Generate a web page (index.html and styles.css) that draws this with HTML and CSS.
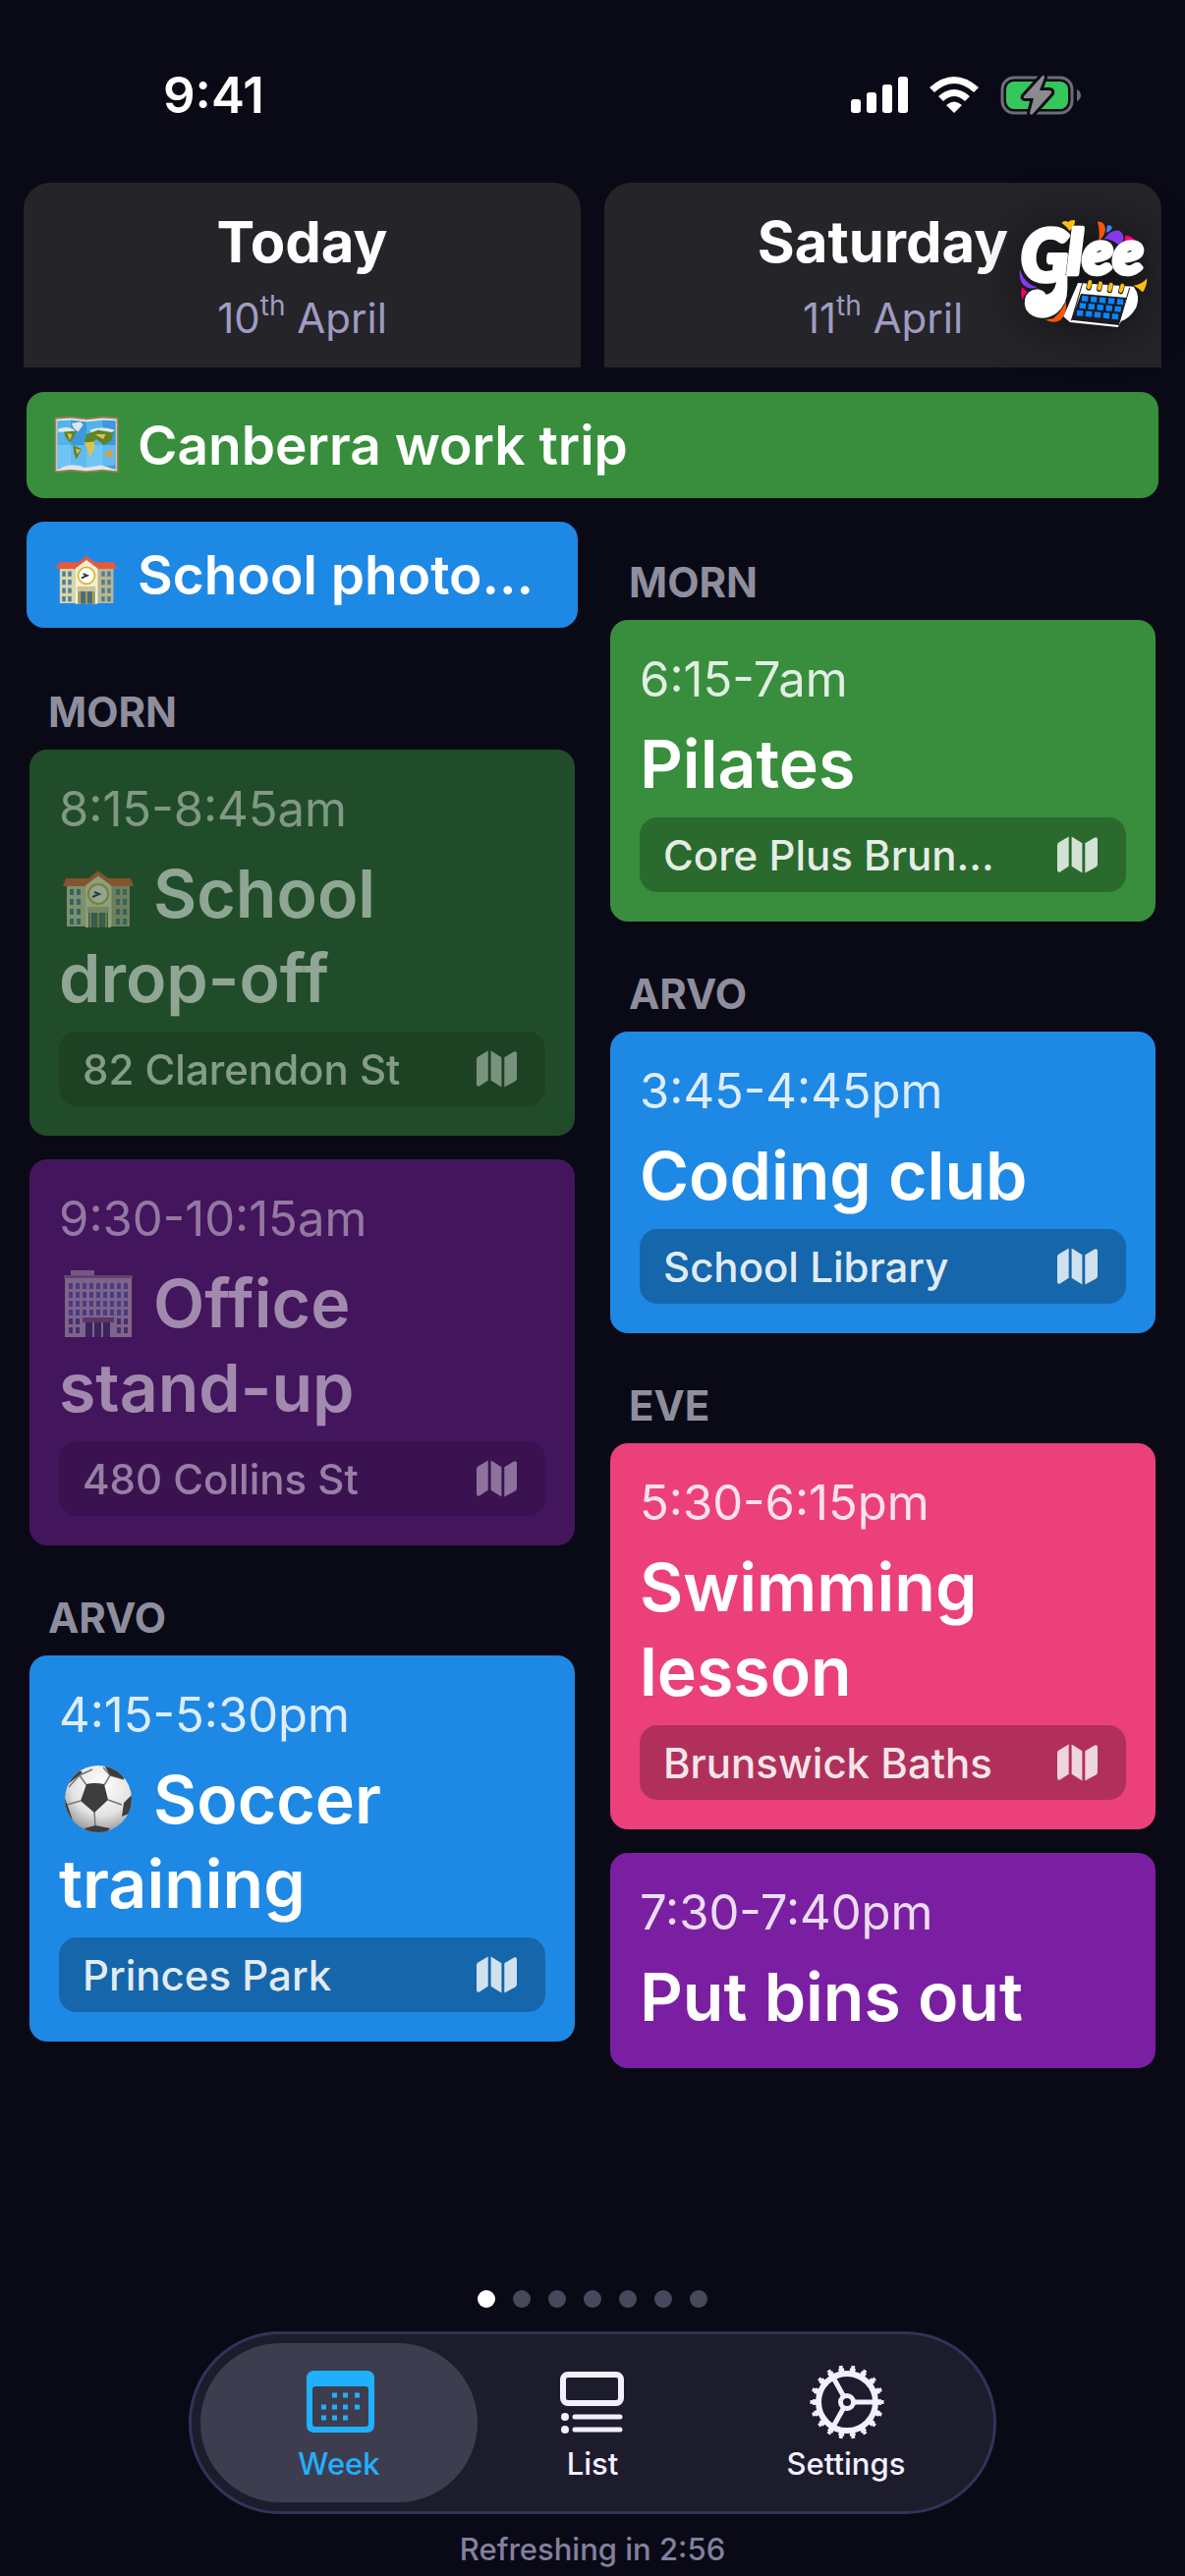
FILE: index.html
```html
<!DOCTYPE html>
<html lang="en-AU">

<head>
    <meta charset="UTF-8">
    <meta name="viewport" content="width=device-width, initial-scale=1.0">
    <title>Glee - Week</title>
    <link rel="stylesheet" href="styles.css">
</head>

<body>
    <!-- shared icons -->
    <svg class="sprite" aria-hidden="true">
        <symbol id="map" viewBox="0 0 42 38">
            <path d="M0 9Q0 7 2 6L12 0V31L3 37Q0 38 0 35Z" />
            <path d="M15 0L26 7V38L15 31Z" />
            <path d="M29 7L39 1Q42 0 42 3V29Q42 31 40 32L29 38Z" />
        </symbol>
        <symbol id="school" viewBox="0 0 80 80">
            <path fill="#d9d3ae" d="M8 30H72V74H8Z" />
            <path fill="#b9b58e" d="M54 30H72V74H54Z" />
            <path fill="#e8593c" d="M7 25H73L76 33H4Z" />
            <path fill="#f4efd2" d="M27 30L40 20L53 30V75H27Z" />
            <path fill="none" stroke="#e8593c" stroke-width="4" d="M24 32L40 20L56 32" />
            <circle cx="40" cy="41" r="10" fill="#fff" stroke="#d8b62c" stroke-width="2" />
            <path fill="none" stroke="#333" stroke-width="2" d="M34 44L41 41L36 39" />
            <path fill="#c9c39c" d="M29 54H51V60H29Z" />
            <path fill="#4b6d80" d="M30 60H50V75H30Z" />
            <path stroke="#e0b91d" stroke-width="1.5" d="M32 60V75M40 60V75M48 60V75" />
            <path stroke="#4d7c94" stroke-width="4" stroke-dasharray="6 4" d="M13 36V72M20 36V72M60 36V72M67 36V72" />
        </symbol>
        <symbol id="world" viewBox="0 0 80 80">
            <path fill="#a9805a" d="M2 7L21 6L40 8L59 6L78 7V73L59 71L40 73L21 71L2 73Z" />
            <path fill="#e7edf0" d="M4 9L21 8L40 10L59 8L76 9V71L59 69L40 71L21 69L4 71Z" />
            <path fill="#55b3ec" d="M5 11L21 10V67L5 69ZM40 12L59 10V67L40 69Z" />
            <path fill="#3b9adb" d="M21 10L40 12V69L21 67ZM59 10L75 11V69L59 67Z" />
            <path fill="#7fd0fb" d="M5 40H75V64L59 66L40 68L21 66L5 67Z" opacity=".6" />
            <path fill="#dfe6e8" d="M22 14L33 12L36 16L30 24L25 20ZM6 21Q18 16 27 23L20 25L6 24ZM44 22Q58 16 74 22L70 25L46 25ZM6 69Q24 60 38 67L58 64L74 69L59 68L40 70L21 68Z" />
            <path fill="#5f8428" d="M13 24L28 23L25 30L20 37L15 31ZM24 40L34 45L28 57L25 50ZM40 27L54 22L72 25L70 34L61 40L52 33L46 38L38 37Z" />
            <path fill="#dcc14d" d="M17 26L23 27L20 34ZM37 37L49 36L50 43L44 55L41 44ZM50 27L63 27L60 33ZM27 44L33 46L29 51Z" />
            <path fill="#e59b27" d="M63 49L70 46L72 53L63 54Z" />
        </symbol>
        <symbol id="office" viewBox="0 0 80 80">
            <path fill="#a99cab" d="M12 7H36V13H12Z" />
            <path fill="#bdb1bb" d="M6 14H74V75H6Z" />
            <path fill="#81727f" d="M5 12H75V15H5Z" />
            <path stroke="#4c68a6" stroke-width="6" stroke-dasharray="4 3" d="M10 23H70M10 32H70M10 41H70M10 50H70" />
            <path stroke="#434c7d" stroke-width="6" stroke-dasharray="4 3" d="M10 59H22M59 59H70M10 68H22M59 68H70" />
            <path fill="#75586e" d="M24 55H56V60H24Z" />
            <path fill="#32345b" d="M27 60H34V75H27ZM36 60H43V75H36ZM45 60H52V75H45Z" />
        </symbol>
        <radialGradient id="shade" cx=".55" cy=".3" r=".75">
            <stop offset="0" stop-color="#fff" />
            <stop offset=".6" stop-color="#e3e3e3" />
            <stop offset="1" stop-color="#8e8e8e" />
        </radialGradient>
        <clipPath id="round">
            <circle cx="40" cy="40" r="34" />
        </clipPath>
        <symbol id="ball" viewBox="0 0 80 80">
            <circle cx="40" cy="40" r="34" fill="url(#shade)" />
            <g clip-path="url(#round)">
                <path fill="none" stroke="#777" stroke-width="1.5" d="M28 26L21 16M46 26L52 16M22 42L8 46M36 53L37 68M50 41L64 46M21 16L34 10M52 16L45 8M21 16L10 28M52 16L66 20" />
                <path fill="#3d3d3d" d="M28 25Q36 23 46 25L50 41L36 54L22 42ZM45 4L66 12V20L52 16ZM18 9L24 13L18 18L8 26ZM4 34L10 50L14 62L4 54ZM66 44L78 32V52L64 58ZM26 70L37 67L52 70L46 78H32Z" />
            </g>
        </symbol>
    </svg>

    <div class="status-bar">
        <span class="clock">9:41</span>
        <div class="status-icons">
            <svg class="signal" viewBox="0 0 58 40" aria-label="Signal">
                <rect y="24" width="10" height="14" rx="3" />
                <rect x="16" y="17" width="10" height="21" rx="3" />
                <rect x="32" y="9" width="10" height="29" rx="3" />
                <rect x="48" y="1" width="10" height="37" rx="3" />
            </svg>
            <svg class="wifi" viewBox="0 0 50 40" aria-label="Wi-Fi">
                <path d="M0 12Q25 -10 50 12L45 17Q25 -1 5 17Z" />
                <path d="M9 21Q25 7 41 21L36 26Q25 16 14 26Z" />
                <path d="M17 30Q25 23 33 30L25 38Z" />
            </svg>
            <svg class="battery" viewBox="0 0 82 42" aria-label="Battery charging">
                <rect x="2" y="3" width="71" height="36" rx="12" fill="none" stroke="#6d6d77" stroke-width="3" />
                <rect x="6" y="7" width="63" height="28" rx="8" fill="#34c759" />
                <path fill="#6d6d77" d="M78 15Q82 17 82 21Q82 25 78 27Z" />
                <path fill="#8a8a8f" stroke="#0a0a17" stroke-width="6" stroke-linejoin="round" paint-order="stroke" d="M43 1L24 22Q23 24 25 24H34L30 39Q31 42 33 40L52 19Q53 16 50 16H40L45 3Q45 0 43 1Z" />
            </svg>
        </div>
    </div>

    <header class="days">
        <div class="day">
            <h1>Today</h1>
            <p>10<sup>th</sup> April</p>
        </div>
        <div class="day">
            <h1>Saturday</h1>
            <p>11<sup>th</sup> April</p>
        </div>
        <svg class="logo" viewBox="170 125 396 336" role="img" aria-label="Glee">
            <path fill="#ffbe0b" d="M300 139Q309 130 320 137Q330 128 341 132Q342 148 325 164Q315 150 300 139Z" />
            <path fill="#fb5607" d="M410 136Q432 134 434 160Q432 180 414 194Q418 165 410 136Z" />
            <path fill="#3a86ff" d="M439 148Q452 143 455 155Q450 165 437 170Z" />
            <path fill="#8338ec" d="M430 188Q450 160 476 163Q493 172 488 194L477 211Q460 190 430 188Z" />
            <path fill="#ff006e" d="M495 178Q511 177 526 194L492 200Z" />
            <path fill="#8338ec" d="M173 280Q184 324 226 336Q202 346 184 330Q168 312 173 280Z" />
            <path fill="#ff006e" d="M180 336Q188 348 196 350Q184 360 181 374Q173 358 180 336Z" />
            <path fill="#fb5607" d="M313 376Q310 400 275 432Q242 436 256 438Q270 445 290 440Q320 422 313 376Z" />
            <path fill="#ffbe0b" d="M520 331Q546 328 561 309Q560 336 548 351Q540 342 520 331Z" />
            <!-- swash under the wordmark -->
            <path fill="#fff" d="M286 300H318V340Q318 390 284 416Q248 440 214 424Q182 408 188 374Q194 344 226 342Q246 345 252 358Q284 356 286 300Z" />
            <g class="wordmark">
                <text x="176" y="316">G<tspan class="wordmark-small" x="318" y="296">lee</tspan></text>
            </g>
            <path fill="#fff" d="M350 323L520 334Q542 362 528 398Q510 430 482 440L472 458L326 443L306 426Z" />
            <path fill="#1b1b1f" d="M359 356L498 368L474 452L330 436Z" />
            <path fill="none" stroke="#1b1b1f" stroke-width="3" d="M364 324L330 438M508 338L474 452" />
            <path stroke="#0a84ff" stroke-width="17" stroke-dasharray="19 8" d="M362 370L494 382M355 392L487 404M347 414L479 427" />
            <path stroke="#1b1b1f" stroke-width="16" stroke-linecap="round" d="M386 322L383 338M418 326L415 342M450 330L447 346M485 333L481 349" />
            <path stroke="#ffbe0b" stroke-width="12" stroke-linecap="round" d="M387 320L383 336M419 324L415 340M451 328L447 344M486 331L481 347" />
        </svg>
    </header>

    <main class="agenda">
        <div class="all-day green span">
            <svg class="emoji" role="img" aria-label="World map"><use href="#world" /></svg>
            <span>Canberra work trip</span>
        </div>

        <div class="column">
            <div class="all-day blue">
                <svg class="emoji" role="img" aria-label="School"><use href="#school" /></svg>
                <span>School photo…</span>
            </div>

            <section>
                <h2>MORN</h2>
                <article class="card green-past">
                    <time>8:15-8:45am</time>
                    <h3><svg class="emoji" role="img" aria-label="School"><use href="#school" /></svg>School drop-off</h3>
                    <a class="place" href="#"><span>82 Clarendon St</span><svg><use href="#map" /></svg></a>
                </article>
                <article class="card purple-past">
                    <time>9:30-10:15am</time>
                    <h3><svg class="emoji" role="img" aria-label="Office"><use href="#office" /></svg>Office<br>stand-up</h3>
                    <a class="place" href="#"><span>480 Collins St</span><svg><use href="#map" /></svg></a>
                </article>
            </section>

            <section>
                <h2>ARVO</h2>
                <article class="card blue">
                    <time>4:15-5:30pm</time>
                    <h3><svg class="emoji" role="img" aria-label="Soccer ball"><use href="#ball" /></svg>Soccer training</h3>
                    <a class="place" href="#"><span>Princes Park</span><svg><use href="#map" /></svg></a>
                </article>
            </section>
        </div>

        <div class="column">
            <section>
                <h2>MORN</h2>
                <article class="card green">
                    <time>6:15-7am</time>
                    <h3>Pilates</h3>
                    <a class="place" href="#"><span>Core Plus Brun…</span><svg><use href="#map" /></svg></a>
                </article>
            </section>

            <section>
                <h2>ARVO</h2>
                <article class="card blue">
                    <time>3:45-4:45pm</time>
                    <h3>Coding club</h3>
                    <a class="place" href="#"><span>School Library</span><svg><use href="#map" /></svg></a>
                </article>
            </section>

            <section>
                <h2>EVE</h2>
                <article class="card pink">
                    <time>5:30-6:15pm</time>
                    <h3>Swimming lesson</h3>
                    <a class="place" href="#"><span>Brunswick Baths</span><svg><use href="#map" /></svg></a>
                </article>
                <article class="card purple">
                    <time>7:30-7:40pm</time>
                    <h3>Put bins out</h3>
                </article>
            </section>
        </div>
    </main>

    <footer>
        <div class="dots">
            <i class="on"></i><i></i><i></i><i></i><i></i><i></i><i></i>
        </div>

        <nav class="tabs">
            <button type="button" class="tab active">
                <svg viewBox="0 0 78 78">
                    <path fill="currentColor" fill-rule="evenodd" d="M14 7H67Q75 7 75 15V62Q75 70 67 70H14Q6 70 6 62V15Q6 7 14 7ZM15 23Q12 23 12 26V61Q12 64 15 64H66Q69 64 69 61V26Q69 23 66 23Z" />
                    <path stroke="currentColor" stroke-width="5" d="M32 32H37M43 32H48M55 32H60M21 44H26M32 44H37M43 44H48M55 44H60M21 55H26M32 55H37M43 55H48" />
                </svg>
                Week
            </button>
            <button type="button" class="tab">
                <svg viewBox="0 0 78 78">
                    <g fill="none" stroke="currentColor" stroke-width="6" stroke-linecap="round">
                        <rect x="9" y="11" width="59" height="29" rx="5" />
                        <path stroke-width="5" d="M21 54H67M21 67H67" />
                    </g>
                    <circle cx="11" cy="54" r="4" fill="currentColor" />
                    <circle cx="11" cy="67" r="4" fill="currentColor" />
                </svg>
                List
            </button>
            <button type="button" class="tab">
                <svg viewBox="0 0 78 78">
                    <g fill="none" stroke="currentColor">
                        <circle cx="40" cy="39" r="29" stroke-width="6" />
                        <circle cx="40" cy="39" r="33" stroke-width="4" pathLength="180" stroke-dasharray="5 5" stroke-dashoffset="2.5" />
                        <circle cx="40" cy="39" r="36" stroke-width="3" pathLength="180" stroke-dasharray="3 7" stroke-dashoffset="1.5" />
                        <circle cx="40" cy="39" r="6.5" stroke-width="5" />
                        <path stroke-width="5" d="M48 39H68M36 32L26 14M36 46L26 64" />
                    </g>
                </svg>
                Settings
            </button>
        </nav>

        <p class="refresh">Refreshing in 2:56</p>
    </footer>
</body>

</html>
```

FILE: styles.css
```css
* {
    box-sizing: border-box;
    margin: 0;
}

body {
    display: flex;
    flex-direction: column;
    min-height: 100vh;
    background-color: #0a0a17;
    color: #fff;
    font-family: Inter, "Liberation Sans", sans-serif;
}

.sprite {
    position: absolute;
    width: 0;
    height: 0;
}

/* status bar */
.status-bar {
    display: flex;
    justify-content: space-between;
    align-items: center;
    padding: 67px 106px 59px 166px;
}

.clock {
    font-size: 51px;
    font-weight: 600;
    line-height: 60px;
}

.status-icons {
    display: flex;
    align-items: center;
    gap: 22px;
    fill: #fff;
}

.signal {
    width: 58px;
    height: 40px;
}

.wifi {
    width: 50px;
    height: 40px;
}

.battery {
    width: 82px;
    height: 42px;
}

/* day headings */
.days {
    position: relative;
    display: grid;
    grid-template-columns: 1fr 1fr;
    gap: 24px;
    padding: 0 24px;
    text-align: center;
}

.day {
    padding: 23px 0 25px;
    border-radius: 27px 27px 0 0;
    background-color: #242429;
}

.day h1 {
    font-size: 58px;
    font-weight: 700;
    line-height: 74px;
}

.day p {
    padding-top: 16px;
    color: #a09cc0;
    font-size: 42px;
    line-height: 50px;
}

.day sup {
    font-size: 28px;
    line-height: 0;
    vertical-align: 18px;
}

.logo {
    position: absolute;
    top: 36px;
    right: 37px;
    width: 132px;
    height: 112px;
    overflow: visible;
    filter: drop-shadow(0 0 24px rgba(0, 0, 0, 0.6));
}

.wordmark {
    fill: #fff;
    stroke: #fff;
    stroke-width: 14px;
    stroke-linejoin: round;
    font-family: Lato, sans-serif;
    font-size: 215px;
    font-style: italic;
    font-weight: 900;
}

.wordmark-small {
    font-size: 190px;
}

/* events */
.agenda {
    display: grid;
    grid-template-columns: 1fr 1fr;
    gap: 24px;
    padding: 25px 24px 48px;
}

.column {
    display: flex;
    flex-direction: column;
    gap: 24px;
    min-width: 0;
    padding: 0 3px;
}

.all-day {
    display: flex;
    align-items: center;
    gap: 18px;
    height: 108px;
    padding: 0 27px;
    border-radius: 18px;
    font-size: 55px;
    font-weight: 600;
    white-space: nowrap;
}

.all-day .emoji {
    flex: none;
    width: 68px;
    height: 68px;
}

.span {
    grid-column: 1 / -1;
    margin: 0 3px;
}

section {
    display: flex;
    flex-direction: column;
    gap: 24px;
    padding: 24px 3px 0;
}

.column section:first-child,
.all-day + section {
    padding-top: 36px;
}

section h2 {
    margin-bottom: -12px;
    padding-left: 19px;
    color: #8f8e9e;
    font-size: 42px;
    font-weight: 700;
    line-height: 52px;
}

.card {
    display: flex;
    flex-direction: column;
    gap: 12px;
    padding: 30px;
    border-radius: 18px;
}

.card time {
    color: rgba(255, 255, 255, 0.85);
    font-size: 49px;
    line-height: 61px;
}

.card h3 {
    font-size: 68px;
    font-weight: 600;
    line-height: 86px;
}

.card h3 .emoji {
    width: 80px;
    height: 80px;
    margin-right: 16px;
    vertical-align: -15px;
}

.place {
    display: flex;
    justify-content: space-between;
    align-items: center;
    height: 76px;
    padding: 0 29px 0 24px;
    border-radius: 18px;
    background-color: rgba(0, 0, 0, 0.25);
    color: rgba(255, 255, 255, 0.9);
    font-size: 42px;
    font-weight: 500;
    text-decoration: none;
    white-space: nowrap;
}

.place svg {
    width: 41px;
    height: 38px;
    fill: rgba(255, 255, 255, 0.8);
}

.green {
    background-color: #388e3c;
}

.blue {
    background-color: #1e88e5;
}

.pink {
    background-color: #ec407a;
}

.purple {
    background-color: #7b1fa2;
}

/* events already finished */
.green-past {
    background-color: rgba(56, 142, 60, 0.5);
}

.purple-past {
    background-color: rgba(123, 31, 162, 0.5);
}

.green-past > *,
.purple-past > * {
    opacity: 0.5;
}

/* bottom bar */
footer {
    display: flex;
    flex-direction: column;
    align-items: center;
    margin-top: auto;
    padding-bottom: 9px;
}

.dots {
    display: flex;
    gap: 18px;
    padding-bottom: 24px;
}

.dots i {
    width: 18px;
    height: 18px;
    border-radius: 50%;
    background-color: #48475c;
}

.dots .on {
    background-color: #fff;
}

.tabs {
    display: flex;
    padding: 9px;
    border: 3px solid #34325a;
    border-radius: 93px;
    background-color: #1d1c2c;
}

.tab {
    display: flex;
    flex-direction: column;
    align-items: center;
    gap: 6px;
    width: 282px;
    padding: 21px 0;
    border: 0;
    border-radius: 81px;
    background: none;
    color: #f2f0ff;
    font: 500 31px/36px Inter, "Liberation Sans", sans-serif;
}

.tab + .tab {
    margin-left: -24px;
}

.tab svg {
    width: 78px;
    height: 78px;
}

.tab.active {
    background-color: #3e3d50;
    color: #20b0ff;
}

.refresh {
    padding-top: 18px;
    color: #84809f;
    font-size: 31px;
    font-weight: 500;
    line-height: 36px;
}
```
